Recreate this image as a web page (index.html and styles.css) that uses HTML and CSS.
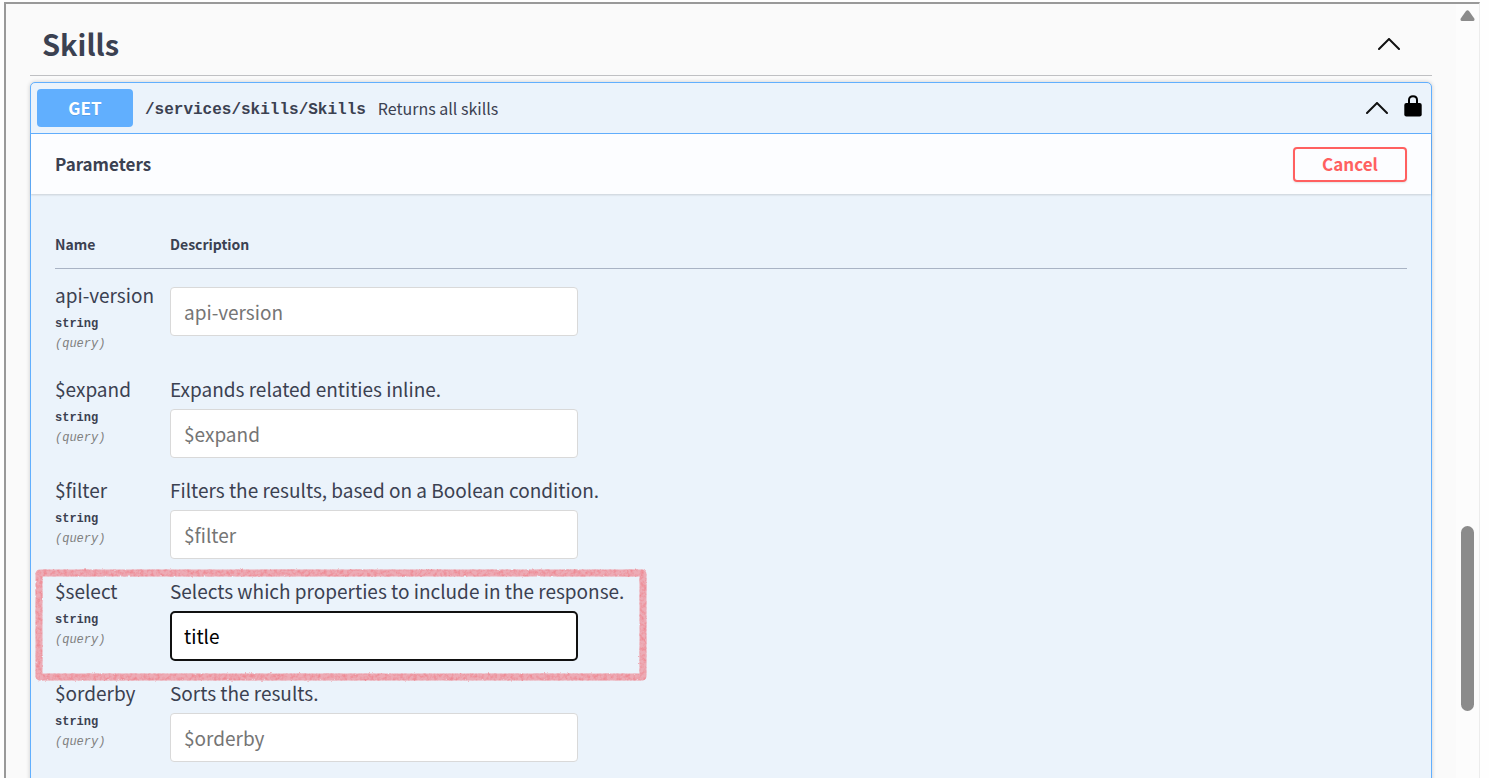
FILE: index.html
```html
<!DOCTYPE html>
<html lang="en">
<head>
    <meta charset="UTF-8">
    <meta name="viewport" content="width=device-width, initial-scale=1.0">
    <title>Skills API</title>
    <link rel="stylesheet" href="styles.css">
</head>
<body>

    <div class="frame">
        <main class="content">
            <div class="tag-header">
                <h1>Skills</h1>
                <button type="button" class="icon-button" aria-label="Collapse section">
                    <svg width="22" height="12" viewBox="0 0 22 12"><path d="M1 11 L11 1 L21 11"/></svg>
                </button>
            </div>

            <section class="opblock">
                <div class="summary">
                    <span class="method">GET</span>
                    <span class="path">/services/skills/Skills</span>
                    <span class="summary-text">Returns all skills</span>
                    <button type="button" class="icon-button" aria-label="Collapse operation">
                        <svg width="22" height="12" viewBox="0 0 22 12"><path d="M1 11 L11 1 L21 11"/></svg>
                    </button>
                    <button type="button" class="icon-button lock" aria-label="Authorization">
                        <svg width="18" height="22" viewBox="0 0 18 22">
                            <path class="shackle" d="M5 10 V5 C5 2.5 6.5 1.2 9 1.2 C11.5 1.2 13 2.5 13 5 V10"/>
                            <rect x="0.3" y="8" width="17.4" height="13.6" rx="2"/>
                        </svg>
                    </button>
                </div>

                <div class="section-header">
                    <h2>Parameters</h2>
                    <button type="button" class="cancel">Cancel</button>
                </div>

                <div class="table-container">
                    <table class="parameters">
                        <thead>
                            <tr>
                                <th class="col-name">Name</th>
                                <th>Description</th>
                            </tr>
                        </thead>
                        <tbody>
                            <tr>
                                <td>
                                    <label class="name" for="api-version">api-version</label>
                                    <div class="type">string</div>
                                    <div class="in">(query)</div>
                                </td>
                                <td>
                                    <input type="text" id="api-version" placeholder="api-version">
                                </td>
                            </tr>
                            <tr>
                                <td>
                                    <label class="name" for="expand">$expand</label>
                                    <div class="type">string</div>
                                    <div class="in">(query)</div>
                                </td>
                                <td>
                                    <p>Expands related entities inline.</p>
                                    <input type="text" id="expand" placeholder="$expand">
                                </td>
                            </tr>
                            <tr>
                                <td>
                                    <label class="name" for="filter">$filter</label>
                                    <div class="type">string</div>
                                    <div class="in">(query)</div>
                                </td>
                                <td>
                                    <p>Filters the results, based on a Boolean condition.</p>
                                    <input type="text" id="filter" placeholder="$filter">
                                </td>
                            </tr>
                            <tr class="marked">
                                <td>
                                    <label class="name" for="select">$select</label>
                                    <div class="type">string</div>
                                    <div class="in">(query)</div>
                                    <svg class="marker" width="615" height="115" viewBox="0 0 615 115">
                                        <filter id="crayon" x="0" y="0" width="615" height="115" filterUnits="userSpaceOnUse" color-interpolation-filters="sRGB">
                                            <feTurbulence type="fractalNoise" baseFrequency="0.3" numOctaves="3" seed="4" result="noise"/>
                                            <feDisplacementMap in="SourceGraphic" in2="noise" scale="2" xChannelSelector="R" yChannelSelector="G" result="edge"/>
                                            <feColorMatrix in="noise" type="matrix" values="0 0 0 0 0.93  0 0 0 0 0.54  0 0 0 0 0.58  2.5 0 0 0 -1"/>
                                            <feComposite in2="edge" operator="in" result="strokes"/>
                                            <feMerge>
                                                <feMergeNode in="edge"/>
                                                <feMergeNode in="strokes"/>
                                            </feMerge>
                                        </filter>
                                        <rect x="5" y="5" width="604" height="104" rx="1" filter="url(#crayon)"/>
                                    </svg>
                                </td>
                                <td>
                                    <p>Selects which properties to include in the response.</p>
                                    <input type="text" id="select" class="active" placeholder="$select" value="title">
                                </td>
                            </tr>
                            <tr>
                                <td>
                                    <label class="name" for="orderby">$orderby</label>
                                    <div class="type">string</div>
                                    <div class="in">(query)</div>
                                </td>
                                <td>
                                    <p>Sorts the results.</p>
                                    <input type="text" id="orderby" placeholder="$orderby">
                                </td>
                            </tr>
                        </tbody>
                    </table>
                </div>
            </section>
        </main>

        <div class="scrollbar">
            <svg width="15" height="11" viewBox="0 0 15 11"><path d="M6 1 Q7.5 -0.5 9 1 L14.3 8.5 Q15 11 13 11 H2 Q0 11 0.7 8.5 Z"/></svg>
            <div class="space-above"></div>
            <div class="thumb"></div>
            <div class="space-below"></div>
        </div>
    </div>

</body>
</html>
```
FILE: styles.css
```css
* {
    box-sizing: border-box;
}
body {
    margin: 0;
    height: 100vh;
    padding: 2px 9px 0 4px;
    overflow: hidden;
    background: #fefefe;
    color: #3b4151;
    font-family: "Noto Sans CJK JP", sans-serif;
}
h1, h2, p {
    margin: 0;
}
.frame {
    display: flex;
    height: 100%;
    overflow: hidden;
    background: #fafafa;
    border-top: 2px solid #999;
    border-left: 2px solid #999;
    border-right: 1px solid #ececec;
}
.content {
    flex: 1;
    padding: 0 24px;
}
.tag-header {
    display: flex;
    align-items: center;
    justify-content: space-between;
    height: 72px;
    padding: 8px 32px 0 12px;
    margin-bottom: 6px;
    border-bottom: 1px solid #bfc0c3;
}
.tag-header h1 {
    font-size: 29px;
    line-height: 40px;
    padding-bottom: 2px;
}
.icon-button {
    display: flex;
    padding: 0;
    border: none;
    background: none;
    cursor: pointer;
}
.icon-button path {
    fill: none;
    stroke: #111;
    stroke-width: 2;
    stroke-linecap: round;
}
.icon-button .shackle {
    stroke: #000;
}
.opblock {
    min-height: 800px;
    background: #ebf3fb;
    border: 1px solid #61affe;
    border-radius: 5px;
    box-shadow: 0 0 4px rgba(0, 0, 0, 0.19);
}
.summary {
    display: flex;
    align-items: center;
    padding: 6px 9px 6px 6px;
    border-bottom: 1px solid #61affe;
}
.method {
    width: 96px;
    margin-right: 12px;
    background: #61affe;
    border-radius: 4px;
    color: #fff;
    font-size: 17px;
    font-weight: 700;
    line-height: 38px;
    text-align: center;
    text-shadow: 0 1px 0 rgba(0, 0, 0, 0.1);
}
.path {
    padding-top: 3px;
    font-family: "Liberation Mono", monospace;
    font-size: 16px;
    font-weight: 700;
}
.summary-text {
    flex: 1;
    margin-left: 12px;
    font-size: 16px;
    line-height: 24px;
}
.lock {
    margin: 0 0 4px 16px;
}
.section-header {
    display: flex;
    align-items: center;
    justify-content: space-between;
    height: 60px;
    padding: 0 24px;
    background: #fcfdff;
    box-shadow: 0 1px 2px rgba(0, 0, 0, 0.15);
}
.section-header h2 {
    font-size: 17px;
    line-height: 24px;
}
.cancel {
    width: 114px;
    height: 35px;
    padding: 0;
    background: transparent;
    border: 2px solid #ff6060;
    border-radius: 4px;
    box-shadow: 0 1px 2px rgba(0, 0, 0, 0.1);
    color: #ff6060;
    font-family: inherit;
    font-size: 17px;
    font-weight: 700;
    line-height: 24px;
    cursor: pointer;
}
.table-container {
    padding: 24px;
}
.parameters {
    width: 100%;
    border-collapse: separate;
    border-spacing: 0;
}
.parameters th {
    padding: 16px 0 14px;
    border-bottom: 1px solid #a9b3c4;
    font-size: 14px;
    line-height: 20px;
    text-align: left;
}
.parameters .col-name {
    width: 115px;
}
.parameters td {
    padding: 13px 0 6px;
    vertical-align: top;
}
.parameters td:first-child {
    padding-bottom: 9px;
}
.name, .parameters p {
    display: block;
    font-size: 19px;
    line-height: 26px;
}
.parameters p {
    margin-bottom: 7px;
}
.type, .in {
    font-family: "Liberation Mono", monospace;
    font-size: 12px;
    line-height: 20px;
}
.type {
    margin-top: 6px;
    font-weight: 700;
}
.in {
    color: #808080;
    font-style: italic;
}
.parameters input {
    display: block;
    width: 408px;
    max-width: 100%;
    height: 49px;
    margin-top: 5px;
    padding: 0 13px;
    background: #fff;
    border: 1px solid #d9d9d9;
    border-radius: 4px;
    color: #000;
    font-family: inherit;
    font-size: 19px;
}
.parameters p + input {
    margin-top: 0;
}
.parameters input::placeholder {
    color: #757575;
}
.parameters input.active {
    height: 50px;
    padding: 0 12px 1px;
    border: 2px solid #111;
    border-radius: 5px;
    outline: none;
}
.marked {
    position: relative;
}
.marker {
    position: absolute;
    top: 3px;
    left: -21px;
    pointer-events: none;
}
.marker rect {
    fill: none;
    stroke: #edabb5;
    stroke-width: 7;
}
.scrollbar {
    display: flex;
    flex-direction: column;
    align-items: center;
    width: 23px;
    padding-top: 6px;
    background: #fcfcfc;
}
.scrollbar path {
    fill: #8b8b8b;
}
.space-above {
    flex: 15;
}
.thumb {
    width: 13px;
    height: 185px;
    background: #8b8b8b;
    border-radius: 7px;
}
.space-below {
    flex: 2;
}
```
